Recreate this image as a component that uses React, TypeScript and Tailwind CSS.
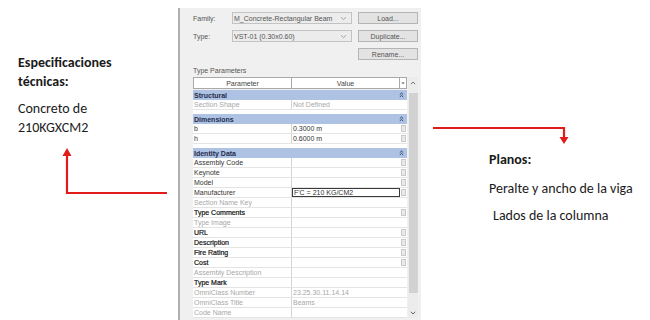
import React from "react";

type Row = {
  label: string;
  group?: boolean;
  gap?: boolean;
  value?: string;
  dim?: boolean;
  strong?: boolean;
  btn?: boolean;
  active?: boolean;
};

const rows: Row[] = [
  { label: "Structural", group: true },
  { label: "Section Shape", value: "Not Defined", dim: true },
  { label: "Dimensions", group: true, gap: true },
  { label: "b", value: "0.3000 m", btn: true },
  { label: "h", value: "0.6000 m", btn: true },
  { label: "Identity Data", group: true, gap: true },
  { label: "Assembly Code", btn: true },
  { label: "Keynote", btn: true },
  { label: "Model", btn: true },
  { label: "Manufacturer", value: "F'C = 210 KG/CM2", btn: true, active: true },
  { label: "Section Name Key", dim: true },
  { label: "Type Comments", strong: true, btn: true },
  { label: "Type Image", dim: true },
  { label: "URL", strong: true, btn: true },
  { label: "Description", strong: true, btn: true },
  { label: "Fire Rating", strong: true, btn: true },
  { label: "Cost", strong: true, btn: true },
  { label: "Assembly Description", dim: true },
  { label: "Type Mark", strong: true },
  { label: "OmniClass Number", value: "23.25.30.11.14.14", dim: true },
  { label: "OmniClass Title", value: "Beams", dim: true },
  { label: "Code Name", dim: true },
];

const Chevron = () => (
  <svg width="7" height="5" viewBox="0 0 7 5" className="shrink-0">
    <path d="M1 1.2 L3.5 3.6 L6 1.2" fill="none" stroke="#9a9a9a" strokeWidth="0.9" />
  </svg>
);

const Collapse = () => (
  <svg width="5" height="6" viewBox="0 0 5 6">
    <path d="M0.8 2.6 L2.5 1 L4.2 2.6 M0.8 5 L2.5 3.4 L4.2 5" fill="none" stroke="#2a3a5c" strokeWidth="0.9" />
  </svg>
);

const Dropdown = ({ text }: { text: string }) => (
  <div className="flex h-[12px] w-[120px] items-center justify-between border border-[#c3c3c3] bg-[#ececec] pl-[1px] pr-[4px] text-[#555]">
    <span>{text}</span>
    <Chevron />
  </div>
);

const Button = ({ text }: { text: string }) => (
  <div className="flex h-[12px] w-[60px] items-center justify-center border border-[#b4b4b4] bg-[#e3e3e3] text-[#555]">
    {text}
  </div>
);

const ParamRow = ({ r }: { r: Row }) => {
  if (r.group) {
    return (
      <div
        className={`flex h-[10px] items-center justify-between bg-[#aec2e3] pl-[1px] pr-[3px] font-bold text-[#1f2d4d] ${
          r.gap ? "mt-[4px]" : ""
        }`}
      >
        <span>{r.label}</span>
        <Collapse />
      </div>
    );
  }
  const tone = r.dim ? "text-[#a8a8a8]" : r.strong ? "text-[#111] [-webkit-text-stroke:0.2px_#111]" : "text-[#333]";
  return (
    <div className="flex h-[10px] border-b border-[#e4e4e4] bg-white">
      <div className={`flex w-[99px] shrink-0 items-center border-r border-[#d4d4d4] pl-[1px] ${tone}`}>
        {r.label}
      </div>
      <div
        className={`flex w-[108px] shrink-0 items-center pl-[1px] ${
          r.dim ? "text-[#a8a8a8]" : "text-[#333]"
        } ${r.active ? "border border-[#3a3a3a]" : ""}`}
      >
        {r.value}
      </div>
      <div className="flex w-[7px] shrink-0 items-stretch justify-center py-[1px]">
        {r.btn && <div className="w-[5px] border border-[#c9c9c9] bg-[#e9e9e9]" />}
      </div>
    </div>
  );
};

export default function App() {
  const note = "font-['Carlito','Lato',sans-serif] text-[14px] leading-[19px] text-[#1b1b1b]";
  return (
    <div className="flex h-[320px] w-[650px] overflow-hidden bg-white">
      {/* left note */}
      <div className={`flex w-[178px] shrink-0 flex-col pt-[53px] ${note}`}>
        <div className="pl-[18px] font-bold">
          <div>Especificaciones</div>
          <div>técnicas:</div>
        </div>
        <div className="mt-[8px] pl-[18px]">
          <div>Concreto de</div>
          <div>210KGXCM2</div>
        </div>
        <svg width="178" height="52" viewBox="0 0 178 52" className="mt-[9px]">
          <polyline points="67,9 67,47 167,47" fill="none" stroke="#e21b1b" strokeWidth="2.2" />
          <polygon points="62.5,10 71.5,10 67,2" fill="#e21b1b" />
        </svg>
      </div>

      {/* revit type properties */}
      <div className="mt-[8px] flex w-[243px] shrink-0 flex-col border-l-2 border-[#b0b0b0] bg-[#f0f0f0] pl-[13px] font-['Liberation_Sans',sans-serif] text-[7px] leading-none">
        <div className="mt-[4px] flex items-center">
          <span className="w-[39px] text-[#555]">Family:</span>
          <Dropdown text="M_Concrete-Rectangular Beam" />
          <div className="ml-[6px]">
            <Button text="Load..." />
          </div>
        </div>
        <div className="mt-[6px] flex items-center">
          <span className="w-[39px] text-[#555]">Type:</span>
          <Dropdown text="VST-01 (0.30x0.60)" />
          <div className="ml-[6px]">
            <Button text="Duplicate..." />
          </div>
        </div>
        <div className="mt-[6px] flex">
          <div className="ml-[165px]">
            <Button text="Rename..." />
          </div>
        </div>
        <div className="mt-[7px] text-[#555]">Type Parameters</div>

        <div className="mt-[3px] flex gap-[1px]">
          <div className="w-[214px] shrink-0">
            <div className="flex h-[12px] border border-[#a9a9a9] bg-white text-[#444]">
              <div className="flex w-[98px] items-center justify-center border-r border-[#a9a9a9]">Parameter</div>
              <div className="flex w-[108px] items-center justify-center border-r border-[#a9a9a9]">Value</div>
              <div className="flex w-[6px] items-center justify-center text-[5px]">=</div>
            </div>
            <div className="mt-[1px] bg-white">
              {rows.map((r) => (
                <ParamRow key={r.label} r={r} />
              ))}
            </div>
          </div>

          <div className="flex w-[10px] shrink-0 flex-col items-center bg-[#ececec]">
            <svg width="6" height="4" viewBox="0 0 6 4" className="mt-[4px]">
              <path d="M0.8 3.2 L3 1 L5.2 3.2" fill="none" stroke="#666" strokeWidth="0.9" />
            </svg>
            <div className="mt-[8px] h-[200px] w-[9px] bg-[#d2d2d2]" />
            <svg width="6" height="4" viewBox="0 0 6 4" className="mt-[18px]">
              <path d="M0.8 0.8 L3 3 L5.2 0.8" fill="none" stroke="#555" strokeWidth="0.9" />
            </svg>
          </div>
        </div>
      </div>

      {/* right note */}
      <div className={`flex flex-1 flex-col pt-[120px] ${note}`}>
        <svg width="230" height="28" viewBox="0 0 230 28">
          <polyline points="12,8 143,8 143,18" fill="none" stroke="#e21b1b" strokeWidth="2.2" />
          <polygon points="138.5,17 147.5,17 143,24" fill="#e21b1b" />
        </svg>
        <div className="mt-[2px] pl-[68px] font-bold">Planos:</div>
        <div className="mt-[10px] pl-[68px]">Peralte y ancho de la viga</div>
        <div className="mt-[8px] pl-[72px]">Lados de la columna</div>
      </div>
    </div>
  );
}
